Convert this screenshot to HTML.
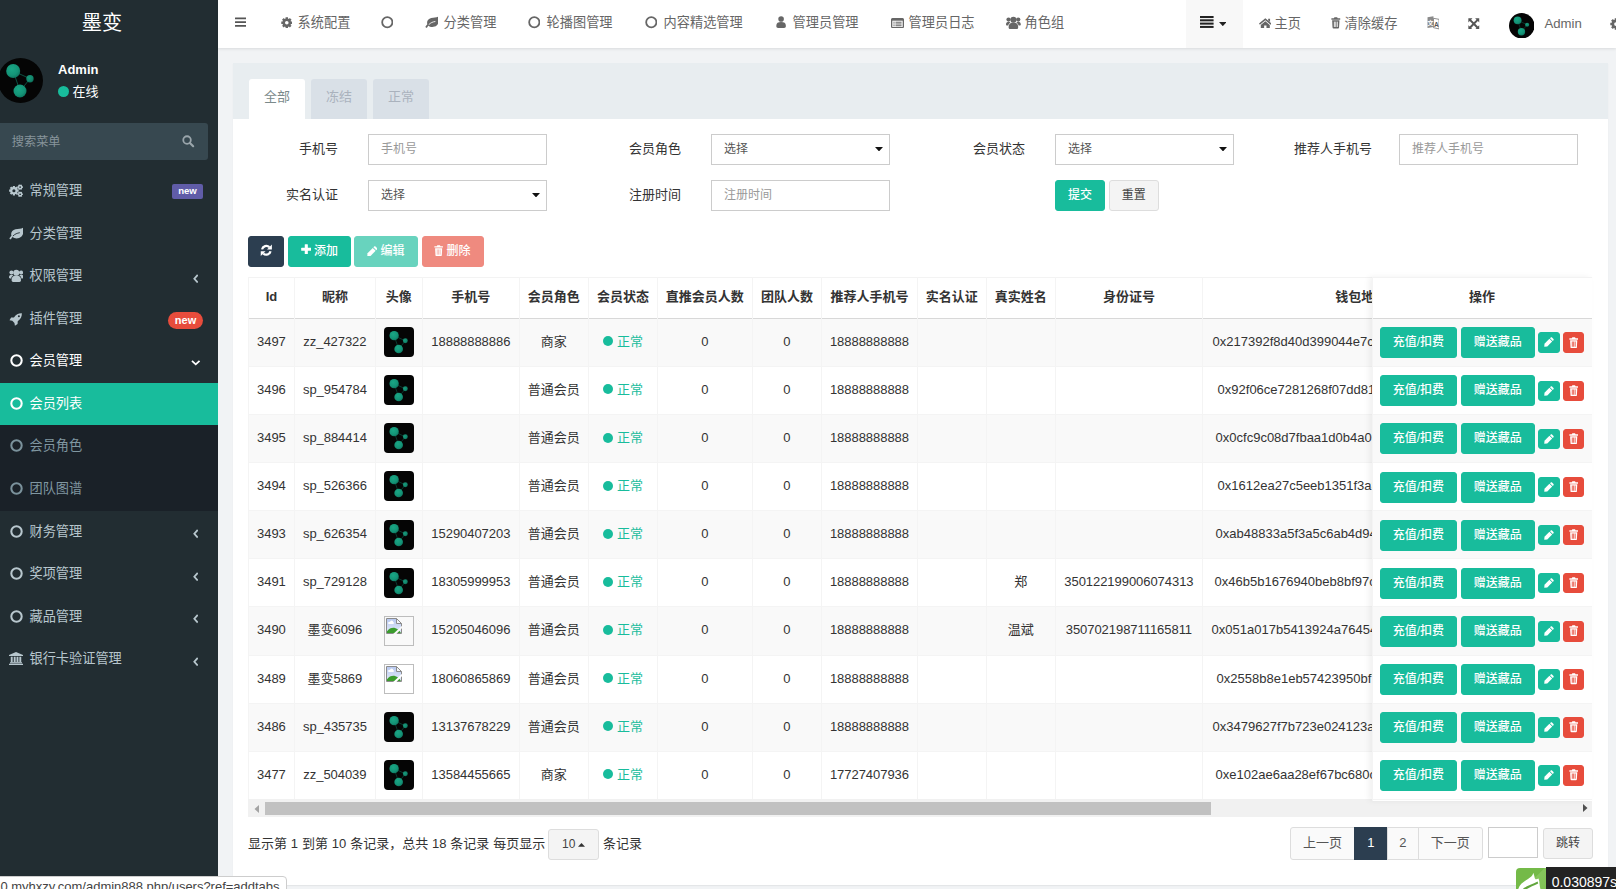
<!DOCTYPE html>
<html lang="zh-CN">
<head>
<meta charset="utf-8">
<title>墨变</title>
<style>

*{box-sizing:border-box;margin:0;padding:0}
html,body{width:1616px;height:889px;overflow:hidden}
body{position:relative;background:#f1f3f5;font-family:"Liberation Sans","Noto Sans CJK SC",sans-serif;font-size:13px;color:#333;line-height:1}
.ic{display:block;position:absolute}
.abs{position:absolute;white-space:nowrap}
/* ---------- sidebar ---------- */
#side{position:absolute;left:0;top:0;width:218px;height:889px;background:#222d32;overflow:hidden}
#side .logo{position:absolute;left:0;top:0;width:204px;height:47px;text-align:center;color:#fff;font-size:20.2px;line-height:47.6px;font-weight:400}
#side .uname{left:58px;top:62px;color:#fff;font-weight:bold;font-size:13px;line-height:15px}
#side .ustat{left:72.6px;top:84px;color:#fff;font-size:13px;line-height:15px}
#side .udot{position:absolute;left:58px;top:86px;width:11px;height:11px;border-radius:50%;background:#18bc9c}
#side .search{position:absolute;left:0;top:123px;width:208px;height:37px;background:#374850;border-radius:0 3px 3px 0}
#side .search span{left:11.8px;top:11px;color:#87949b;font-size:12.2px;line-height:16px}
.mi{position:absolute;left:0;width:218px;height:42.6px;color:#b8c7ce}
.mi .t{left:29.5px;top:13.5px;font-size:13.2px;line-height:16px}
.mi.sub{color:#8097a1}
.subbg{position:absolute;left:0;top:383.2px;width:218px;height:127.8px;background:#1a2128}
.mi.act{color:#fff}
.actbg{position:absolute;left:0;top:383.2px;width:218px;height:42px;background:#18bc9c}
.mi.open{color:#fff}
.badge1{position:absolute;left:172px;top:15px;width:31px;height:15px;background:#605ca8;border-radius:2px;color:#fff;font-size:9.6px;font-weight:bold;line-height:14px;text-align:center}
.badge2{position:absolute;left:168px;top:15px;width:35px;height:17px;background:#e74c3c;border-radius:9px;color:#fff;font-size:11px;font-weight:bold;line-height:16px;text-align:center}
/* ---------- header ---------- */
#head{position:absolute;left:218px;top:0;width:1398px;height:47.5px;background:#fff;box-shadow:0 1px 3px rgba(0,0,0,.10)}
#head .nt{top:15px;font-size:13.2px;line-height:16px;color:#666}
#head .dd{position:absolute;left:967.5px;top:0;width:57.5px;height:47.5px;background:#f8f8f8}
/* ---------- main panel ---------- */
#panel{position:absolute;left:233px;top:63px;width:1375px;height:822px;background:#fff;border-radius:0;box-shadow:0 1px 1px rgba(0,0,0,.05)}
#phead{position:absolute;left:0;top:0;width:1375px;height:56px;background:#e8edf0;border-radius:0}
.tab{position:absolute;top:16px;width:56px;height:40px;border-radius:3px 3px 0 0;background:#d9e0e7;color:#aab2bd;font-size:13px;line-height:35.4px;text-align:center}
.tab.on{background:#fff;color:#7b8a8b}
.lbl{position:absolute;text-align:right;width:120px;font-size:13px;line-height:16px;color:#333}
.inp{position:absolute;width:179px;height:31px;border:1px solid #ccc;background:#fff;border-radius:0;font-size:12px;line-height:16px;color:#999;padding:6.2px 12px}
.inp.sel{color:#555}
.btn{position:absolute;border-radius:3px;color:#fff;font-size:12px;text-align:center;white-space:nowrap}
.b-green{background:#18bc9c;border:1px solid #18bc9c}
.b-dark{background:#2c3e50;border:1px solid #2c3e50}
.b-red{background:#e74c3c;border:1px solid #e74c3c}
.b-def{background:#f4f4f4;border:1px solid #ddd;color:#444}
.dis{opacity:.65}
/* ---------- table ---------- */
#tw{position:absolute;left:15px;top:214.5px;width:1344px;height:523px;overflow:hidden}
table{border-collapse:collapse;table-layout:fixed;width:1560px;font-size:13px}
th,td{border:1px solid #f0f0f0;text-align:center;vertical-align:middle;white-space:nowrap;overflow:hidden;padding:0}
th{height:40.5px;font-weight:bold;color:#333;border-bottom:2px solid #ddd;border-top:1px solid #f0f0f0;background:#fff}
td{height:48.1px;color:#333}
tr.o td{background:#f9f9f9}
.st{color:#18bc9c}
.st i{display:inline-block;width:10px;height:10px;border-radius:50%;background:#18bc9c;margin-right:4px;vertical-align:-0.5px}
.av{position:relative;display:block;width:30px;height:30px;margin:0 auto}
.brk{position:relative;display:block;width:30px;height:30px;margin:0 auto;border:1px solid #bdbdbd;background:transparent;overflow:hidden}
.num{letter-spacing:-0.05px}
#fix{position:absolute;left:1139px;top:214.5px;width:220px;height:523px;background:#fff;box-shadow:-3px 0 6px rgba(0,0,0,.06)}
#fix table{width:220px}
#fix td{position:relative}
.ob{position:absolute;top:8.4px;height:31px;line-height:29px;font-size:12px;font-weight:500}
.ob.s{top:13.6px;height:20.5px;width:22px}
/* scrollbar */
#sb{position:absolute;height:18px;background:#f1f1f1}
#sb .th{position:absolute;left:16.8px;top:3px;width:946px;height:13px;background:#c1c1c1}
/* pagination */
.pinfo{left:15px;top:772px;font-size:13px;line-height:16px;color:#333;word-spacing:0.25px}
.pg{position:absolute;top:764.5px;height:32px;border:1px solid #ddd;background:#fafafa;color:#555;font-size:13px;line-height:30px;text-align:center}
.pg.on{background:#2c3e50;border-color:#2c3e50;color:#fff}
/* overlays */
#status{position:absolute;left:-1px;top:875.7px;width:288.3px;height:20px;background:#fff;border:1px solid #cdcdcd;border-radius:0 4px 0 0;font-size:13px;line-height:16px;color:#444;padding-left:0.5px;padding-top:2.5px;letter-spacing:-0.02px;white-space:nowrap;overflow:hidden}
#trace1{position:absolute;left:1516.2px;top:867.9px;width:30px;height:22px;background:linear-gradient(135deg,#74ba48 0%,#74ba48 55%,#86c65c 56%,#7fc254 100%);border-radius:4px 0 0 0;overflow:hidden}
#trace2{position:absolute;left:1545.9px;top:867.2px;width:71px;height:22px;background:#232323;color:#fff;font-size:14px;line-height:30.6px;padding-left:5.8px;white-space:nowrap;overflow:hidden}

#tw,#fix{overflow:hidden}
.r{position:absolute;left:0;width:1400px;background:#fff;border-bottom:1px solid #f4f4f4}
#fix .r{width:220.4px}
.r.o{background:#f9f9f9}
.r.h{border-top:1px solid #f3f3f3;border-bottom:1.4px solid #d8d8d8;font-weight:bold;background:#fff}
.c{position:absolute;top:0;height:100%;text-align:center;white-space:nowrap;overflow:hidden;font-size:13px;line-height:45px;color:#333}
.r.h .c{line-height:38.4px}
.c .ic{position:absolute}
.c .brk{position:absolute;margin:0}
.vb{position:absolute;top:0;width:1px;height:100%;background:#f4f4f4}
#fix{overflow:visible;z-index:2}
.tb{font-weight:500}

</style>
</head>
<body>
<svg width="0" height="0" style="position:absolute">
<defs>
<radialGradient id="lg" cx="40%" cy="35%" r="75%">
<stop offset="0" stop-color="#1aa685"/><stop offset="0.6" stop-color="#149477"/><stop offset="1" stop-color="#0c6d58"/>
</radialGradient>
<linearGradient id="sky" x1="0" y1="0" x2="0" y2="1"><stop offset="0" stop-color="#b7c8f0"/><stop offset="1" stop-color="#e6edfa"/></linearGradient>
</defs>
</svg>
<div id="side">
<div class="logo">墨变</div>
<div class="subbg"></div><div class="actbg"></div>
<svg class="ic" width="45" height="45" viewBox="0 0 45 45" style="left:-2.4px;top:57.8px"><circle cx="22.5" cy="22.5" r="22.5" fill="#050505"/><g stroke="#0f705b" stroke-width="0.7" fill="none"><path d="M15.2 13 L32 20.7 L22 33 Z"/></g><circle cx="15.2" cy="13" r="7.0" fill="url(#lg)"/><circle cx="32" cy="20.7" r="3.7" fill="url(#lg)" opacity="0.9"/><circle cx="22" cy="33" r="6.5" fill="url(#lg)"/></svg>
<span class="abs uname">Admin</span>
<i class="udot"></i><span class="abs ustat">在线</span>
<div class="search"><span class="abs">搜索菜单</span><svg class="ic" width="12.6" height="12.6" viewBox="0 0 14 14" style="left:182.4px;top:12.4px"><circle cx="5.6" cy="5.6" r="4.2" fill="none" stroke="#9aa5ab" stroke-width="2"/><path d="M8.8 8.8 L12.4 12.4" stroke="#9aa5ab" stroke-width="2.4" stroke-linecap="round"/></svg></div>
<div class="mi " style="top:169.45px"><svg class="ic" width="14" height="13.222222222222221" viewBox="0 0 18 17" style="left:9px;top:15px"><path d="M11.01 7.23 L12.45 7.23 L12.45 9.97 L11.01 9.97 L10.59 10.96 L11.62 11.98 L9.68 13.92 L8.66 12.89 L7.67 13.31 L7.67 14.75 L4.93 14.75 L4.93 13.31 L3.94 12.89 L2.92 13.92 L0.98 11.98 L2.01 10.96 L1.59 9.97 L0.15 9.97 L0.15 7.23 L1.59 7.23 L2.01 6.24 L0.98 5.22 L2.92 3.28 L3.94 4.31 L4.93 3.89 L4.93 2.45 L7.67 2.45 L7.67 3.89 L8.66 4.31 L9.68 3.28 L11.62 5.22 L10.59 6.24 Z M4.30 8.60 a2.0 2.0 0 1 0 4.0 0 a2.0 2.0 0 1 0 -4.0 0 Z" fill="#b8c7ce" fill-rule="evenodd"/><path d="M16.90 2.97 L17.84 2.93 L17.84 5.07 L16.90 5.03 L16.49 5.74 L17.00 6.53 L15.14 7.60 L14.71 6.77 L13.89 6.77 L13.46 7.60 L11.60 6.53 L12.11 5.74 L11.70 5.03 L10.76 5.07 L10.76 2.93 L11.70 2.97 L12.11 2.26 L11.60 1.47 L13.46 0.40 L13.89 1.23 L14.71 1.23 L15.14 0.40 L17.00 1.47 L16.49 2.26 Z M13.20 4.00 a1.1 1.1 0 1 0 2.2 0 a1.1 1.1 0 1 0 -2.2 0 Z" fill="#b8c7ce" fill-rule="evenodd"/><path d="M16.90 12.17 L17.84 12.13 L17.84 14.27 L16.90 14.23 L16.49 14.94 L17.00 15.73 L15.14 16.80 L14.71 15.97 L13.89 15.97 L13.46 16.80 L11.60 15.73 L12.11 14.94 L11.70 14.23 L10.76 14.27 L10.76 12.13 L11.70 12.17 L12.11 11.46 L11.60 10.67 L13.46 9.60 L13.89 10.43 L14.71 10.43 L15.14 9.60 L17.00 10.67 L16.49 11.46 Z M13.20 13.20 a1.1 1.1 0 1 0 2.2 0 a1.1 1.1 0 1 0 -2.2 0 Z" fill="#b8c7ce" fill-rule="evenodd"/></svg><span class="abs t">常规管理</span><span class="badge1">new</span></div>
<div class="mi " style="top:212.03px"><svg class="ic" width="14.4" height="12.6" viewBox="0 0 16 14" style="left:9px;top:15px"><path d="M15.7 0.6 C17 5.2 15.8 10.6 11.2 12.2 C8.4 13.2 5.6 12.6 3.9 11.2 C3.2 11.9 2.7 12.7 2.1 13.8 L0.3 12.9 C1.1 11.5 1.9 10.5 2.7 9.7 C1.6 6.4 3.6 3.2 7.2 2.4 C10.4 1.7 13.7 2.2 15.7 0.6 Z" fill="#b8c7ce"/><path d="M4.6 9.8 C6.6 7.8 9 6.8 11.6 6.4" stroke="#222d32" stroke-width="1.0" stroke-linecap="round" fill="none"/></svg><span class="abs t">分类管理</span></div>
<div class="mi " style="top:254.61px"><svg class="ic" width="14.6" height="12.977777777777778" viewBox="0 0 18 16" style="left:8.9px;top:14.2px"><g fill="#b8c7ce"><circle cx="9" cy="4.6" r="3.7"/><path d="M3.2 14.2 C2.9 10.2 5 8.0 9 8.0 C13 8.0 15.1 10.2 14.8 14.2 C14.7 15.3 14 16 12.9 16 L5.1 16 C4 16 3.3 15.3 3.2 14.2 Z"/><circle cx="3.1" cy="4.3" r="2.6"/><circle cx="14.9" cy="4.3" r="2.6"/><path d="M0 10.2 C0 8.0 1.1 7.0 3 7.0 C4 7.0 4.8 7.3 5.4 7.8 C3.8 8.8 2.9 10 2.7 11.6 L1.4 11.6 C0.5 11.6 0 11.1 0 10.2 Z"/><path d="M18 10.2 C18 8.0 16.9 7.0 15 7.0 C14 7.0 13.2 7.3 12.6 7.8 C14.2 8.8 15.1 10 15.3 11.6 L16.6 11.6 C17.5 11.6 18 11.1 18 10.2 Z"/></g></svg><span class="abs t">权限管理</span><svg class="ic" width="5.7" height="9.5" viewBox="0 0 6 10" style="left:192.8px;top:19px"><path d="M5 1 L1.4 5 L5 9" fill="none" stroke="#b8c7ce" stroke-width="1.9"/></svg></div>
<div class="mi " style="top:297.19px"><svg class="ic" width="13.2" height="13.2" viewBox="0 0 16 16" style="left:9.4px;top:15.6px"><g fill="#b8c7ce"><path d="M15.6 0.4 C15.8 4.4 14.2 7.4 10.6 10 L10.4 13.4 L7.2 15.4 L6.6 12 L4 9.4 L0.6 8.8 L2.6 5.6 L6 5.4 C8.6 1.8 11.6 0.2 15.6 0.4 Z"/></g><circle cx="12" cy="4" r="1.2" fill="#222d32"/></svg><span class="abs t">插件管理</span><span class="badge2">new</span></div>
<div class="mi open" style="top:339.77px"><svg class="ic" width="13" height="13" viewBox="0 0 14 14" style="left:9.5px;top:14.5px"><circle cx="7" cy="7" r="5.6000000000000005" fill="none" stroke="#fff" stroke-width="2.2"/></svg><span class="abs t">会员管理</span><svg class="ic" width="9.5" height="5.7" viewBox="0 0 10 6" style="left:191.3px;top:20.5px"><path d="M1 1 L5 4.6 L9 1" fill="none" stroke="#fff" stroke-width="1.9"/></svg></div>
<div class="mi sub act" style="top:382.35px"><svg class="ic" width="13" height="13" viewBox="0 0 14 14" style="left:9.5px;top:14.5px"><circle cx="7" cy="7" r="5.6000000000000005" fill="none" stroke="#fff" stroke-width="2.2"/></svg><span class="abs t">会员列表</span></div>
<div class="mi sub" style="top:424.93px"><svg class="ic" width="13" height="13" viewBox="0 0 14 14" style="left:9.5px;top:14.5px"><circle cx="7" cy="7" r="5.6000000000000005" fill="none" stroke="#7b929c" stroke-width="2.2"/></svg><span class="abs t">会员角色</span></div>
<div class="mi sub" style="top:467.51px"><svg class="ic" width="13" height="13" viewBox="0 0 14 14" style="left:9.5px;top:14.5px"><circle cx="7" cy="7" r="5.6000000000000005" fill="none" stroke="#7b929c" stroke-width="2.2"/></svg><span class="abs t">团队图谱</span></div>
<div class="mi " style="top:510.09px"><svg class="ic" width="13" height="13" viewBox="0 0 14 14" style="left:9.5px;top:14.5px"><circle cx="7" cy="7" r="5.6000000000000005" fill="none" stroke="#b8c7ce" stroke-width="2.2"/></svg><span class="abs t">财务管理</span><svg class="ic" width="5.7" height="9.5" viewBox="0 0 6 10" style="left:192.8px;top:19px"><path d="M5 1 L1.4 5 L5 9" fill="none" stroke="#b8c7ce" stroke-width="1.9"/></svg></div>
<div class="mi " style="top:552.67px"><svg class="ic" width="13" height="13" viewBox="0 0 14 14" style="left:9.5px;top:14.5px"><circle cx="7" cy="7" r="5.6000000000000005" fill="none" stroke="#b8c7ce" stroke-width="2.2"/></svg><span class="abs t">奖项管理</span><svg class="ic" width="5.7" height="9.5" viewBox="0 0 6 10" style="left:192.8px;top:19px"><path d="M5 1 L1.4 5 L5 9" fill="none" stroke="#b8c7ce" stroke-width="1.9"/></svg></div>
<div class="mi " style="top:595.25px"><svg class="ic" width="13" height="13" viewBox="0 0 14 14" style="left:9.5px;top:14.5px"><circle cx="7" cy="7" r="5.6000000000000005" fill="none" stroke="#b8c7ce" stroke-width="2.2"/></svg><span class="abs t">藏品管理</span><svg class="ic" width="5.7" height="9.5" viewBox="0 0 6 10" style="left:192.8px;top:19px"><path d="M5 1 L1.4 5 L5 9" fill="none" stroke="#b8c7ce" stroke-width="1.9"/></svg></div>
<div class="mi " style="top:637.83px"><svg class="ic" width="14" height="13.125" viewBox="0 0 16 15" style="left:8.5px;top:14px"><g fill="#b8c7ce"><path d="M8 0 L16 3.4 L16 4.6 L0 4.6 L0 3.4 Z"/><rect x="2" y="5.4" width="2.2" height="6"/><rect x="5.4" y="5.4" width="2.2" height="6"/><rect x="8.6" y="5.4" width="2.2" height="6"/><rect x="11.8" y="5.4" width="2.2" height="6"/><rect x="1.2" y="11.6" width="13.6" height="1.4"/><rect x="0" y="13.4" width="16" height="1.6"/></g></svg><span class="abs t">银行卡验证管理</span><svg class="ic" width="5.7" height="9.5" viewBox="0 0 6 10" style="left:192.8px;top:19px"><path d="M5 1 L1.4 5 L5 9" fill="none" stroke="#b8c7ce" stroke-width="1.9"/></svg></div>
</div>
<div id="head">
<svg class="ic" width="11.2" height="10.266666666666666" viewBox="0 0 12 11" style="left:17px;top:17px"><g fill="#555"><rect x="0" y="0.5" width="12" height="2" rx="0.4"/><rect x="0" y="4.5" width="12" height="2" rx="0.4"/><rect x="0" y="8.5" width="12" height="2" rx="0.4"/></g></svg>
<svg class="ic" width="11.6" height="11.6" viewBox="0 0 16 16" style="left:62.69999999999999px;top:16.6px"><path d="M13.76 6.33 L15.61 6.30 L15.61 9.70 L13.76 9.67 L13.26 10.89 L14.59 12.18 L12.18 14.59 L10.89 13.26 L9.67 13.76 L9.70 15.61 L6.30 15.61 L6.33 13.76 L5.11 13.26 L3.82 14.59 L1.41 12.18 L2.74 10.89 L2.24 9.67 L0.39 9.70 L0.39 6.30 L2.24 6.33 L2.74 5.11 L1.41 3.82 L3.82 1.41 L5.11 2.74 L6.33 2.24 L6.30 0.39 L9.70 0.39 L9.67 2.24 L10.89 2.74 L12.18 1.41 L14.59 3.82 L13.26 5.11 Z M5.50 8.00 a2.5 2.5 0 1 0 5.0 0 a2.5 2.5 0 1 0 -5.0 0 Z" fill="#666" fill-rule="evenodd"/></svg>
<span class="abs nt" style="left:79.6px;top:14.6px">系统配置</span>
<svg class="ic" width="12.6" height="12.6" viewBox="0 0 14 14" style="left:162.60000000000002px;top:16px"><circle cx="7" cy="7" r="5.7" fill="none" stroke="#666" stroke-width="2.0"/></svg>
<svg class="ic" width="13.8" height="12.075000000000001" viewBox="0 0 16 14" style="left:206.60000000000002px;top:16.4px"><path d="M15.7 0.6 C17 5.2 15.8 10.6 11.2 12.2 C8.4 13.2 5.6 12.6 3.9 11.2 C3.2 11.9 2.7 12.7 2.1 13.8 L0.3 12.9 C1.1 11.5 1.9 10.5 2.7 9.7 C1.6 6.4 3.6 3.2 7.2 2.4 C10.4 1.7 13.7 2.2 15.7 0.6 Z" fill="#666"/><path d="M4.6 9.8 C6.6 7.8 9 6.8 11.6 6.4" stroke="#fff" stroke-width="1.0" stroke-linecap="round" fill="none"/></svg>
<span class="abs nt" style="left:225.6px;top:14.6px">分类管理</span>
<svg class="ic" width="12.6" height="12.6" viewBox="0 0 14 14" style="left:309.79999999999995px;top:16px"><circle cx="7" cy="7" r="5.7" fill="none" stroke="#666" stroke-width="2.0"/></svg>
<span class="abs nt" style="left:328.6px;top:14.6px">轮播图管理</span>
<svg class="ic" width="12.6" height="12.6" viewBox="0 0 14 14" style="left:426.79999999999995px;top:16px"><circle cx="7" cy="7" r="5.7" fill="none" stroke="#666" stroke-width="2.0"/></svg>
<span class="abs nt" style="left:445.6px;top:14.6px">内容精选管理</span>
<svg class="ic" width="10.2" height="11.899999999999999" viewBox="0 0 12 14" style="left:557.8px;top:16.2px"><g fill="#666"><circle cx="6" cy="3.6" r="3.3"/><path d="M0.4 12 C0.2 8.6 2.2 7.2 6 7.2 C9.8 7.2 11.8 8.6 11.6 12 C11.5 13.3 10.8 14 9.6 14 L2.4 14 C1.2 14 0.5 13.3 0.4 12 Z"/></g></svg>
<span class="abs nt" style="left:574.6px;top:14.6px">管理员管理</span>
<svg class="ic" width="13" height="10.214285714285714" viewBox="0 0 14 11" style="left:672.5px;top:17.5px"><rect x="0.7" y="0.7" width="12.6" height="9.6" rx="1" fill="none" stroke="#666" stroke-width="1.4"/><g fill="#666"><rect x="0.7" y="0.7" width="12.6" height="2.2"/><rect x="2.6" y="4" width="1.3" height="1.1"/><rect x="4.8" y="4" width="6.6" height="1.1"/><rect x="2.6" y="5.9" width="1.3" height="1.1"/><rect x="4.8" y="5.9" width="6.6" height="1.1"/><rect x="2.6" y="7.8" width="1.3" height="1.1"/><rect x="4.8" y="7.8" width="6.6" height="1.1"/></g></svg>
<span class="abs nt" style="left:690.6px;top:14.6px">管理员日志</span>
<svg class="ic" width="14.8" height="13.155555555555557" viewBox="0 0 18 16" style="left:788px;top:16px"><g fill="#666"><circle cx="9" cy="4.6" r="3.7"/><path d="M3.2 14.2 C2.9 10.2 5 8.0 9 8.0 C13 8.0 15.1 10.2 14.8 14.2 C14.7 15.3 14 16 12.9 16 L5.1 16 C4 16 3.3 15.3 3.2 14.2 Z"/><circle cx="3.1" cy="4.3" r="2.6"/><circle cx="14.9" cy="4.3" r="2.6"/><path d="M0 10.2 C0 8.0 1.1 7.0 3 7.0 C4 7.0 4.8 7.3 5.4 7.8 C3.8 8.8 2.9 10 2.7 11.6 L1.4 11.6 C0.5 11.6 0 11.1 0 10.2 Z"/><path d="M18 10.2 C18 8.0 16.9 7.0 15 7.0 C14 7.0 13.2 7.3 12.6 7.8 C14.2 8.8 15.1 10 15.3 11.6 L16.6 11.6 C17.5 11.6 18 11.1 18 10.2 Z"/></g></svg>
<span class="abs nt" style="left:806.6px;top:14.6px">角色组</span>
<div class="dd"><svg class="ic" width="13.6" height="11.948571428571428" viewBox="0 0 14 12.3" style="left:14.8px;top:16.2px"><g fill="#222"><rect x="0" y="0" width="14" height="2.1"/><rect x="0" y="3.4" width="14" height="2.1"/><rect x="0" y="6.8" width="14" height="2.1"/><rect x="0" y="10.2" width="14" height="2.1"/></g></svg><svg class="ic" width="7.6" height="4.18" viewBox="0 0 10 5.5" style="left:33.2px;top:21.8px"><path d="M0 0 L10 0 L5 5.5 Z" fill="#222"/></svg></div>
<svg class="ic" width="12.6" height="10.799999999999999" viewBox="0 0 14 12" style="left:1040.6px;top:17.6px"><g fill="#666"><path d="M7 0.2 L14 6.2 L13 7.5 L7 2.5 L1 7.5 L0 6.2 Z"/><path d="M10.2 0.8 L12.3 0.8 L12.3 4.4 L10.2 2.7 Z"/><path d="M7 3.5 L12 7.7 L12 12 L8.3 12 L8.3 8.4 L5.7 8.4 L5.7 12 L2 12 L2 7.7 Z"/></g></svg>
<span class="abs nt" style="left:1056.6px;top:15.6px">主页</span>
<svg class="ic" width="9.6" height="11.52" viewBox="0 0 10 12" style="left:1113px;top:17.4px"><g fill="#666"><path d="M3.6 0.2 L6.4 0.2 L7 1.4 L9.6 1.4 L9.6 2.8 L0.4 2.8 L0.4 1.4 L3 1.4 Z"/><path d="M1.2 3.4 L8.8 3.4 L8.4 11 C8.35 11.6 8 12 7.4 12 L2.6 12 C2 12 1.65 11.6 1.6 11 Z"/></g><g fill="#fff"><rect x="3" y="4.8" width="0.9" height="5.6"/><rect x="4.55" y="4.8" width="0.9" height="5.6"/><rect x="6.1" y="4.8" width="0.9" height="5.6"/></g></svg>
<span class="abs nt" style="left:1126.6px;top:15.6px">清除缓存</span>
<svg class="ic" width="12.5" height="13.541666666666666" viewBox="0 0 12 13" style="left:1208.5px;top:16px"><path d="M0.5 1.2 L6.2 0.3 L6.2 10.6 L0.5 11.6 Z" fill="#8a8a8a"/><path d="M6.2 2.2 L11.6 3.2 L11.6 12.4 L6.2 11.2 Z" fill="#fff" stroke="#777" stroke-width="0.8"/><text x="3.3" y="8.2" font-size="6" font-family="Liberation Sans, Noto Sans CJK SC, sans-serif" font-weight="bold" fill="#fff" text-anchor="middle">文</text><text x="9" y="10.2" font-size="6.4" font-family="Liberation Sans, Noto Sans CJK SC, sans-serif" font-weight="bold" fill="#555" text-anchor="middle">A</text></svg>
<svg class="ic" width="11.6" height="11.6" viewBox="0 0 13 13" style="left:1250px;top:17.8px"><g fill="#555"><path d="M0.4 0.4 L5 0.4 L3.5 1.9 L6.5 4.9 L9.5 1.9 L8 0.4 L12.6 0.4 L12.6 5 L11.1 3.5 L8.1 6.5 L11.1 9.5 L12.6 8 L12.6 12.6 L8 12.6 L9.5 11.1 L6.5 8.1 L3.5 11.1 L5 12.6 L0.4 12.6 L0.4 8 L1.9 9.5 L4.9 6.5 L1.9 3.5 L0.4 5 Z"/></g></svg>
<svg class="ic" width="25.5" height="25.5" viewBox="0 0 45 45" style="left:1290.6px;top:12.6px"><circle cx="22.5" cy="22.5" r="22.5" fill="#050505"/><g stroke="#0f705b" stroke-width="0.7" fill="none"><path d="M15.2 13 L32 20.7 L22 33 Z"/></g><circle cx="15.2" cy="13" r="7.0" fill="url(#lg)"/><circle cx="32" cy="20.7" r="3.7" fill="url(#lg)" opacity="0.9"/><circle cx="22" cy="33" r="6.5" fill="url(#lg)"/></svg>
<span class="abs nt" style="left:1326.3999999999999px;top:15.6px">Admin</span>
<svg class="ic" width="12" height="12" viewBox="0 0 16 16" style="left:1392.2px;top:17.6px"><path d="M13.76 6.33 L15.61 6.30 L15.61 9.70 L13.76 9.67 L13.26 10.89 L14.59 12.18 L12.18 14.59 L10.89 13.26 L9.67 13.76 L9.70 15.61 L6.30 15.61 L6.33 13.76 L5.11 13.26 L3.82 14.59 L1.41 12.18 L2.74 10.89 L2.24 9.67 L0.39 9.70 L0.39 6.30 L2.24 6.33 L2.74 5.11 L1.41 3.82 L3.82 1.41 L5.11 2.74 L6.33 2.24 L6.30 0.39 L9.70 0.39 L9.67 2.24 L10.89 2.74 L12.18 1.41 L14.59 3.82 L13.26 5.11 Z M5.50 8.00 a2.5 2.5 0 1 0 5.0 0 a2.5 2.5 0 1 0 -5.0 0 Z" fill="#666" fill-rule="evenodd"/></svg>
</div>
<div id="panel">
<div id="phead"><div class="tab on" style="left:16px">全部</div><div class="tab" style="left:78px">冻结</div><div class="tab" style="left:140px">正常</div></div>
<div class="lbl" style="left:-15px;top:77.5px">手机号</div><div class="inp" style="left:135px;top:71px">手机号</div>
<div class="lbl" style="left:328px;top:77.5px">会员角色</div><div class="inp sel" style="left:478px;top:71px">选择<svg class="ic" width="8" height="4.4" viewBox="0 0 10 5.5" style="left:163px;top:12px"><path d="M0 0 L10 0 L5 5.5 Z" fill="#111"/></svg></div>
<div class="lbl" style="left:672px;top:77.5px">会员状态</div><div class="inp sel" style="left:822px;top:71px">选择<svg class="ic" width="8" height="4.4" viewBox="0 0 10 5.5" style="left:163px;top:12px"><path d="M0 0 L10 0 L5 5.5 Z" fill="#111"/></svg></div>
<div class="lbl" style="left:1019px;top:77.5px">推荐人手机号</div><div class="inp" style="left:1166px;top:71px">推荐人手机号</div>
<div class="lbl" style="left:-15px;top:123.5px">实名认证</div><div class="inp sel" style="left:135px;top:117px">选择<svg class="ic" width="8" height="4.4" viewBox="0 0 10 5.5" style="left:163px;top:12px"><path d="M0 0 L10 0 L5 5.5 Z" fill="#111"/></svg></div>
<div class="lbl" style="left:328px;top:123.5px">注册时间</div><div class="inp" style="left:478px;top:117px">注册时间</div>
<div class="btn b-green tb" style="left:822px;top:117px;width:50px;height:31px;line-height:29px">提交</div>
<div class="btn b-def" style="left:876px;top:117px;width:49.5px;height:31px;line-height:29px">重置</div>
<div class="btn b-dark" style="left:15px;top:173px;width:36px;height:31px"><svg class="ic" width="12.6" height="12.6" viewBox="0 0 14 14" style="left:11.100000000000023px;top:7.300000000000011px"><g fill="none" stroke="#fff" stroke-width="2.5"><path d="M2.3 6.0 A4.8 4.8 0 0 1 10.4 3.5"/><path d="M11.7 8.0 A4.8 4.8 0 0 1 3.6 10.5"/></g><g fill="#fff"><path d="M13.2 0.6 L13.2 6 L7.8 6 Z"/><path d="M0.8 13.4 L0.8 8 L6.2 8 Z"/></g></svg></div>
<div class="btn b-green tb" style="left:55.30000000000001px;top:173px;width:62.4px;height:31px;line-height:29px;text-align:left;padding-left:24.6px"><svg class="ic" width="10.6" height="10.6" viewBox="0 0 11 11" style="left:11.3px;top:6.9px"><g fill="#fff"><rect x="3.9" y="0.2" width="3.2" height="10.6" rx="0.6"/><rect x="0.2" y="3.9" width="10.6" height="3.2" rx="0.6"/></g></svg>添加</div>
<div class="btn b-green dis tb" style="left:121px;top:173px;width:63.8px;height:31px;line-height:29px;text-align:left;padding-left:25.6px"><svg class="ic" width="10.6" height="10.6" viewBox="0 0 12 12" style="left:11.9px;top:8.6px"><g fill="#fff"><path d="M8.1 0.6 C8.5 0.2 9.2 0.2 9.6 0.6 L11.4 2.4 C11.8 2.8 11.8 3.5 11.4 3.9 L10.5 4.8 L7.2 1.5 Z"/><path d="M6.5 2.2 L9.8 5.5 L3.9 11.4 L0.3 11.7 L0.6 8.1 Z"/></g></svg>编辑</div>
<div class="btn b-red dis tb" style="left:189px;top:173px;width:61.6px;height:31px;line-height:29px;text-align:left;padding-left:23.4px"><svg class="ic" width="9.3" height="11.16" viewBox="0 0 10 12" style="left:11.3px;top:8.2px"><g fill="#fff"><path d="M3.6 0.2 L6.4 0.2 L7 1.4 L9.6 1.4 L9.6 2.8 L0.4 2.8 L0.4 1.4 L3 1.4 Z"/><path d="M1.2 3.4 L8.8 3.4 L8.4 11 C8.35 11.6 8 12 7.4 12 L2.6 12 C2 12 1.65 11.6 1.6 11 Z"/></g><g fill="#ee8d84"><rect x="3" y="4.8" width="0.9" height="5.6"/><rect x="4.55" y="4.8" width="0.9" height="5.6"/><rect x="6.1" y="4.8" width="0.9" height="5.6"/></g></svg>删除</div>
<div id="tw" style="left:15.4px;top:214.4px;width:1343.9px;height:522.5px">
<div class="r h" style="top:0;height:41.5px">
<div class="c " style="left:0.0px;width:46.1px">Id</div>
<div class="c " style="left:46.1px;width:80.8px">昵称</div>
<div class="c " style="left:126.9px;width:47.1px">头像</div>
<div class="c " style="left:174.0px;width:96.9px">手机号</div>
<div class="c " style="left:270.9px;width:69.2px">会员角色</div>
<div class="c " style="left:340.1px;width:68.8px">会员状态</div>
<div class="c " style="left:408.9px;width:95.1px">直推会员人数</div>
<div class="c " style="left:504.0px;width:69.1px">团队人数</div>
<div class="c " style="left:573.1px;width:95.9px">推荐人手机号</div>
<div class="c " style="left:669.0px;width:68.8px">实名认证</div>
<div class="c " style="left:737.8px;width:69.2px">真实姓名</div>
<div class="c " style="left:807.0px;width:147.0px">身份证号</div>
<div class="c " style="left:954.0px;width:317.6px">钱包地址</div>
</div>
<div class="r o" style="top:41.5px;height:48.1px">
<div class="c num" style="left:0.0px;width:46.1px">3497</div>
<div class="c num" style="left:46.1px;width:80.8px">zz_427322</div>
<div class="c " style="left:126.9px;width:47.1px"><svg class="ic" width="30" height="30" viewBox="0 0 45 45" style="left:8.6px;top:8.3px"><rect x="0" y="0" width="45" height="45" rx="6" ry="6" fill="#050505"/><g stroke="#0f705b" stroke-width="0.7" fill="none"><path d="M15.2 13 L32 20.7 L22 33 Z"/></g><circle cx="15.2" cy="13" r="7.0" fill="url(#lg)"/><circle cx="32" cy="20.7" r="3.7" fill="url(#lg)" opacity="0.9"/><circle cx="22" cy="33" r="6.5" fill="url(#lg)"/></svg></div>
<div class="c num" style="left:174.0px;width:96.9px">18888888886</div>
<div class="c " style="left:270.9px;width:69.2px">商家</div>
<div class="c " style="left:340.1px;width:68.8px"><span class="st"><i></i>正常</span></div>
<div class="c " style="left:408.9px;width:95.1px">0</div>
<div class="c " style="left:504.0px;width:69.1px">0</div>
<div class="c num" style="left:573.1px;width:95.9px">18888888888</div>
<div class="c " style="left:669.0px;width:68.8px"></div>
<div class="c " style="left:737.8px;width:69.2px"></div>
<div class="c num" style="left:807.0px;width:147.0px"></div>
<div class="c" style="left:954.0px;width:330px;text-align:left;padding-left:10.2px">0x217392f8d40d399044e7c5a1b03e9f27d6c84a10b5</div>
</div>
<div class="r" style="top:89.6px;height:48.1px">
<div class="c num" style="left:0.0px;width:46.1px">3496</div>
<div class="c num" style="left:46.1px;width:80.8px">sp_954784</div>
<div class="c " style="left:126.9px;width:47.1px"><svg class="ic" width="30" height="30" viewBox="0 0 45 45" style="left:8.6px;top:8.3px"><rect x="0" y="0" width="45" height="45" rx="6" ry="6" fill="#050505"/><g stroke="#0f705b" stroke-width="0.7" fill="none"><path d="M15.2 13 L32 20.7 L22 33 Z"/></g><circle cx="15.2" cy="13" r="7.0" fill="url(#lg)"/><circle cx="32" cy="20.7" r="3.7" fill="url(#lg)" opacity="0.9"/><circle cx="22" cy="33" r="6.5" fill="url(#lg)"/></svg></div>
<div class="c num" style="left:174.0px;width:96.9px"></div>
<div class="c " style="left:270.9px;width:69.2px">普通会员</div>
<div class="c " style="left:340.1px;width:68.8px"><span class="st"><i></i>正常</span></div>
<div class="c " style="left:408.9px;width:95.1px">0</div>
<div class="c " style="left:504.0px;width:69.1px">0</div>
<div class="c num" style="left:573.1px;width:95.9px">18888888888</div>
<div class="c " style="left:669.0px;width:68.8px"></div>
<div class="c " style="left:737.8px;width:69.2px"></div>
<div class="c num" style="left:807.0px;width:147.0px"></div>
<div class="c" style="left:954.0px;width:330px;text-align:left;padding-left:15.2px">0x92f06ce7281268f07dd81c3b5a9e04f67d2a1b8c3e</div>
</div>
<div class="r o" style="top:137.7px;height:48.1px">
<div class="c num" style="left:0.0px;width:46.1px">3495</div>
<div class="c num" style="left:46.1px;width:80.8px">sp_884414</div>
<div class="c " style="left:126.9px;width:47.1px"><svg class="ic" width="30" height="30" viewBox="0 0 45 45" style="left:8.6px;top:8.3px"><rect x="0" y="0" width="45" height="45" rx="6" ry="6" fill="#050505"/><g stroke="#0f705b" stroke-width="0.7" fill="none"><path d="M15.2 13 L32 20.7 L22 33 Z"/></g><circle cx="15.2" cy="13" r="7.0" fill="url(#lg)"/><circle cx="32" cy="20.7" r="3.7" fill="url(#lg)" opacity="0.9"/><circle cx="22" cy="33" r="6.5" fill="url(#lg)"/></svg></div>
<div class="c num" style="left:174.0px;width:96.9px"></div>
<div class="c " style="left:270.9px;width:69.2px">普通会员</div>
<div class="c " style="left:340.1px;width:68.8px"><span class="st"><i></i>正常</span></div>
<div class="c " style="left:408.9px;width:95.1px">0</div>
<div class="c " style="left:504.0px;width:69.1px">0</div>
<div class="c num" style="left:573.1px;width:95.9px">18888888888</div>
<div class="c " style="left:669.0px;width:68.8px"></div>
<div class="c " style="left:737.8px;width:69.2px"></div>
<div class="c num" style="left:807.0px;width:147.0px"></div>
<div class="c" style="left:954.0px;width:330px;text-align:left;padding-left:13.2px">0x0cfc9c08d7fbaa1d0b4a09e3c5f7128b6d4a0e9c71</div>
</div>
<div class="r" style="top:185.8px;height:48.1px">
<div class="c num" style="left:0.0px;width:46.1px">3494</div>
<div class="c num" style="left:46.1px;width:80.8px">sp_526366</div>
<div class="c " style="left:126.9px;width:47.1px"><svg class="ic" width="30" height="30" viewBox="0 0 45 45" style="left:8.6px;top:8.3px"><rect x="0" y="0" width="45" height="45" rx="6" ry="6" fill="#050505"/><g stroke="#0f705b" stroke-width="0.7" fill="none"><path d="M15.2 13 L32 20.7 L22 33 Z"/></g><circle cx="15.2" cy="13" r="7.0" fill="url(#lg)"/><circle cx="32" cy="20.7" r="3.7" fill="url(#lg)" opacity="0.9"/><circle cx="22" cy="33" r="6.5" fill="url(#lg)"/></svg></div>
<div class="c num" style="left:174.0px;width:96.9px"></div>
<div class="c " style="left:270.9px;width:69.2px">普通会员</div>
<div class="c " style="left:340.1px;width:68.8px"><span class="st"><i></i>正常</span></div>
<div class="c " style="left:408.9px;width:95.1px">0</div>
<div class="c " style="left:504.0px;width:69.1px">0</div>
<div class="c num" style="left:573.1px;width:95.9px">18888888888</div>
<div class="c " style="left:669.0px;width:68.8px"></div>
<div class="c " style="left:737.8px;width:69.2px"></div>
<div class="c num" style="left:807.0px;width:147.0px"></div>
<div class="c" style="left:954.0px;width:330px;text-align:left;padding-left:15.2px">0x1612ea27c5eeb1351f3a8d40b97c6e25f1a3d8b047</div>
</div>
<div class="r o" style="top:233.9px;height:48.1px">
<div class="c num" style="left:0.0px;width:46.1px">3493</div>
<div class="c num" style="left:46.1px;width:80.8px">sp_626354</div>
<div class="c " style="left:126.9px;width:47.1px"><svg class="ic" width="30" height="30" viewBox="0 0 45 45" style="left:8.6px;top:8.3px"><rect x="0" y="0" width="45" height="45" rx="6" ry="6" fill="#050505"/><g stroke="#0f705b" stroke-width="0.7" fill="none"><path d="M15.2 13 L32 20.7 L22 33 Z"/></g><circle cx="15.2" cy="13" r="7.0" fill="url(#lg)"/><circle cx="32" cy="20.7" r="3.7" fill="url(#lg)" opacity="0.9"/><circle cx="22" cy="33" r="6.5" fill="url(#lg)"/></svg></div>
<div class="c num" style="left:174.0px;width:96.9px">15290407203</div>
<div class="c " style="left:270.9px;width:69.2px">普通会员</div>
<div class="c " style="left:340.1px;width:68.8px"><span class="st"><i></i>正常</span></div>
<div class="c " style="left:408.9px;width:95.1px">0</div>
<div class="c " style="left:504.0px;width:69.1px">0</div>
<div class="c num" style="left:573.1px;width:95.9px">18888888888</div>
<div class="c " style="left:669.0px;width:68.8px"></div>
<div class="c " style="left:737.8px;width:69.2px"></div>
<div class="c num" style="left:807.0px;width:147.0px"></div>
<div class="c" style="left:954.0px;width:330px;text-align:left;padding-left:13.2px">0xab48833a5f3a5c6ab4d94e07c1b82f6d3a59e0c714</div>
</div>
<div class="r" style="top:282.0px;height:48.1px">
<div class="c num" style="left:0.0px;width:46.1px">3491</div>
<div class="c num" style="left:46.1px;width:80.8px">sp_729128</div>
<div class="c " style="left:126.9px;width:47.1px"><svg class="ic" width="30" height="30" viewBox="0 0 45 45" style="left:8.6px;top:8.3px"><rect x="0" y="0" width="45" height="45" rx="6" ry="6" fill="#050505"/><g stroke="#0f705b" stroke-width="0.7" fill="none"><path d="M15.2 13 L32 20.7 L22 33 Z"/></g><circle cx="15.2" cy="13" r="7.0" fill="url(#lg)"/><circle cx="32" cy="20.7" r="3.7" fill="url(#lg)" opacity="0.9"/><circle cx="22" cy="33" r="6.5" fill="url(#lg)"/></svg></div>
<div class="c num" style="left:174.0px;width:96.9px">18305999953</div>
<div class="c " style="left:270.9px;width:69.2px">普通会员</div>
<div class="c " style="left:340.1px;width:68.8px"><span class="st"><i></i>正常</span></div>
<div class="c " style="left:408.9px;width:95.1px">0</div>
<div class="c " style="left:504.0px;width:69.1px">0</div>
<div class="c num" style="left:573.1px;width:95.9px">18888888888</div>
<div class="c " style="left:669.0px;width:68.8px"></div>
<div class="c " style="left:737.8px;width:69.2px">郑</div>
<div class="c num" style="left:807.0px;width:147.0px">350122199006074313</div>
<div class="c" style="left:954.0px;width:330px;text-align:left;padding-left:12.2px">0x46b5b1676940beb8bf97c2d1e4a03f58b6c7d9e012</div>
</div>
<div class="r o" style="top:330.1px;height:48.1px">
<div class="c num" style="left:0.0px;width:46.1px">3490</div>
<div class="c num" style="left:46.1px;width:80.8px">墨变6096</div>
<div class="c " style="left:126.9px;width:47.1px"><span class="brk" style="left:8.6px;top:8.3px"><svg class="ic" width="16" height="16" viewBox="0 0 16 16" style="left:1px;top:1px;overflow:visible"><path d="M0.5 0.5 H10.5 L15.5 5.5 V15.5 H0.5 Z" fill="url(#sky)" stroke="#8c8c8c" stroke-width="1"/><path d="M10.5 0.5 V5.5 H15.5 Z" fill="#f2f5fa" stroke="#8c8c8c" stroke-width="1" stroke-linejoin="round"/><ellipse cx="5" cy="4.9" rx="3.1" ry="1.2" fill="#fff"/><circle cx="5.6" cy="4" r="1.5" fill="#fff"/><path d="M1 15 L1 13.2 C3 10.6 6 9.4 9 10 C11.4 10.5 13.4 12.4 15 15 Z" fill="#3b9c2e"/><path d="M6.6 16.6 L9.9 16.6 L16.6 9.6 L16.6 7.2 Z" fill="#f9f9f9"/></svg></span></div>
<div class="c num" style="left:174.0px;width:96.9px">15205046096</div>
<div class="c " style="left:270.9px;width:69.2px">普通会员</div>
<div class="c " style="left:340.1px;width:68.8px"><span class="st"><i></i>正常</span></div>
<div class="c " style="left:408.9px;width:95.1px">0</div>
<div class="c " style="left:504.0px;width:69.1px">0</div>
<div class="c num" style="left:573.1px;width:95.9px">18888888888</div>
<div class="c " style="left:669.0px;width:68.8px"></div>
<div class="c " style="left:737.8px;width:69.2px">温斌</div>
<div class="c num" style="left:807.0px;width:147.0px">350702198711165811</div>
<div class="c" style="left:954.0px;width:330px;text-align:left;padding-left:9.2px">0x051a017b5413924a76454c8e2d9f3b60a17c5e8d24</div>
</div>
<div class="r" style="top:378.2px;height:48.1px">
<div class="c num" style="left:0.0px;width:46.1px">3489</div>
<div class="c num" style="left:46.1px;width:80.8px">墨变5869</div>
<div class="c " style="left:126.9px;width:47.1px"><span class="brk" style="left:8.6px;top:8.3px"><svg class="ic" width="16" height="16" viewBox="0 0 16 16" style="left:1px;top:1px;overflow:visible"><path d="M0.5 0.5 H10.5 L15.5 5.5 V15.5 H0.5 Z" fill="url(#sky)" stroke="#8c8c8c" stroke-width="1"/><path d="M10.5 0.5 V5.5 H15.5 Z" fill="#f2f5fa" stroke="#8c8c8c" stroke-width="1" stroke-linejoin="round"/><ellipse cx="5" cy="4.9" rx="3.1" ry="1.2" fill="#fff"/><circle cx="5.6" cy="4" r="1.5" fill="#fff"/><path d="M1 15 L1 13.2 C3 10.6 6 9.4 9 10 C11.4 10.5 13.4 12.4 15 15 Z" fill="#3b9c2e"/><path d="M6.6 16.6 L9.9 16.6 L16.6 9.6 L16.6 7.2 Z" fill="#fff"/></svg></span></div>
<div class="c num" style="left:174.0px;width:96.9px">18060865869</div>
<div class="c " style="left:270.9px;width:69.2px">普通会员</div>
<div class="c " style="left:340.1px;width:68.8px"><span class="st"><i></i>正常</span></div>
<div class="c " style="left:408.9px;width:95.1px">0</div>
<div class="c " style="left:504.0px;width:69.1px">0</div>
<div class="c num" style="left:573.1px;width:95.9px">18888888888</div>
<div class="c " style="left:669.0px;width:68.8px"></div>
<div class="c " style="left:737.8px;width:69.2px"></div>
<div class="c num" style="left:807.0px;width:147.0px"></div>
<div class="c" style="left:954.0px;width:330px;text-align:left;padding-left:14.2px">0x2558b8e1eb57423950bf7a3c1d6e9048b25f7c3a1e</div>
</div>
<div class="r o" style="top:426.3px;height:48.1px">
<div class="c num" style="left:0.0px;width:46.1px">3486</div>
<div class="c num" style="left:46.1px;width:80.8px">sp_435735</div>
<div class="c " style="left:126.9px;width:47.1px"><svg class="ic" width="30" height="30" viewBox="0 0 45 45" style="left:8.6px;top:8.3px"><rect x="0" y="0" width="45" height="45" rx="6" ry="6" fill="#050505"/><g stroke="#0f705b" stroke-width="0.7" fill="none"><path d="M15.2 13 L32 20.7 L22 33 Z"/></g><circle cx="15.2" cy="13" r="7.0" fill="url(#lg)"/><circle cx="32" cy="20.7" r="3.7" fill="url(#lg)" opacity="0.9"/><circle cx="22" cy="33" r="6.5" fill="url(#lg)"/></svg></div>
<div class="c num" style="left:174.0px;width:96.9px">13137678229</div>
<div class="c " style="left:270.9px;width:69.2px">普通会员</div>
<div class="c " style="left:340.1px;width:68.8px"><span class="st"><i></i>正常</span></div>
<div class="c " style="left:408.9px;width:95.1px">0</div>
<div class="c " style="left:504.0px;width:69.1px">0</div>
<div class="c num" style="left:573.1px;width:95.9px">18888888888</div>
<div class="c " style="left:669.0px;width:68.8px"></div>
<div class="c " style="left:737.8px;width:69.2px"></div>
<div class="c num" style="left:807.0px;width:147.0px"></div>
<div class="c" style="left:954.0px;width:330px;text-align:left;padding-left:10.2px">0x3479627f7b723e024123a5d8c9e1f40b67a2d3c8e5</div>
</div>
<div class="r" style="top:474.4px;height:48.1px">
<div class="c num" style="left:0.0px;width:46.1px">3477</div>
<div class="c num" style="left:46.1px;width:80.8px">zz_504039</div>
<div class="c " style="left:126.9px;width:47.1px"><svg class="ic" width="30" height="30" viewBox="0 0 45 45" style="left:8.6px;top:8.3px"><rect x="0" y="0" width="45" height="45" rx="6" ry="6" fill="#050505"/><g stroke="#0f705b" stroke-width="0.7" fill="none"><path d="M15.2 13 L32 20.7 L22 33 Z"/></g><circle cx="15.2" cy="13" r="7.0" fill="url(#lg)"/><circle cx="32" cy="20.7" r="3.7" fill="url(#lg)" opacity="0.9"/><circle cx="22" cy="33" r="6.5" fill="url(#lg)"/></svg></div>
<div class="c num" style="left:174.0px;width:96.9px">13584455665</div>
<div class="c " style="left:270.9px;width:69.2px">商家</div>
<div class="c " style="left:340.1px;width:68.8px"><span class="st"><i></i>正常</span></div>
<div class="c " style="left:408.9px;width:95.1px">0</div>
<div class="c " style="left:504.0px;width:69.1px">0</div>
<div class="c num" style="left:573.1px;width:95.9px">17727407936</div>
<div class="c " style="left:669.0px;width:68.8px"></div>
<div class="c " style="left:737.8px;width:69.2px"></div>
<div class="c num" style="left:807.0px;width:147.0px"></div>
<div class="c" style="left:954.0px;width:330px;text-align:left;padding-left:13.2px">0xe102ae6aa28ef67bc680c4d1a93b5e7f20c8d6a41b</div>
</div>
<i class="vb" style="left:0.0px"></i>
<i class="vb" style="left:46.1px"></i>
<i class="vb" style="left:126.9px"></i>
<i class="vb" style="left:174.0px"></i>
<i class="vb" style="left:270.9px"></i>
<i class="vb" style="left:340.1px"></i>
<i class="vb" style="left:408.9px"></i>
<i class="vb" style="left:504.0px"></i>
<i class="vb" style="left:573.1px"></i>
<i class="vb" style="left:669.0px"></i>
<i class="vb" style="left:737.8px"></i>
<i class="vb" style="left:807.0px"></i>
<i class="vb" style="left:954.0px"></i>
<i class="vb" style="left:1271.6px"></i>
</div>
<div id="fix" style="left:1138.8px;top:214.4px;width:220.4px;height:523.9px">
<div class="r h" style="top:0;height:41.5px"><div class="c" style="left:0;width:220.4px">操作</div></div>
<div class="r o" style="top:41.5px;height:48.1px"><div class="btn b-green ob" style="left:8px;width:77px">充值/扣费</div><div class="btn b-green ob" style="left:89px;width:74px">赠送藏品</div><div class="btn b-green ob s" style="left:166px"><svg class="ic" width="10" height="10" viewBox="0 0 12 12" style="left:5.5px;top:4px"><g fill="#fff"><path d="M8.1 0.6 C8.5 0.2 9.2 0.2 9.6 0.6 L11.4 2.4 C11.8 2.8 11.8 3.5 11.4 3.9 L10.5 4.8 L7.2 1.5 Z"/><path d="M6.5 2.2 L9.8 5.5 L3.9 11.4 L0.3 11.7 L0.6 8.1 Z"/></g></svg></div><div class="btn b-red ob s" style="left:191px;width:21px"><svg class="ic" width="9.4" height="11.280000000000001" viewBox="0 0 10 12" style="left:4.8px;top:3.1px"><g fill="#fff"><path d="M3.6 0.2 L6.4 0.2 L7 1.4 L9.6 1.4 L9.6 2.8 L0.4 2.8 L0.4 1.4 L3 1.4 Z"/><path d="M1.2 3.4 L8.8 3.4 L8.4 11 C8.35 11.6 8 12 7.4 12 L2.6 12 C2 12 1.65 11.6 1.6 11 Z"/></g><g fill="#e74c3c"><rect x="3" y="4.8" width="0.9" height="5.6"/><rect x="4.55" y="4.8" width="0.9" height="5.6"/><rect x="6.1" y="4.8" width="0.9" height="5.6"/></g></svg></div></div>
<div class="r" style="top:89.6px;height:48.1px"><div class="btn b-green ob" style="left:8px;width:77px">充值/扣费</div><div class="btn b-green ob" style="left:89px;width:74px">赠送藏品</div><div class="btn b-green ob s" style="left:166px"><svg class="ic" width="10" height="10" viewBox="0 0 12 12" style="left:5.5px;top:4px"><g fill="#fff"><path d="M8.1 0.6 C8.5 0.2 9.2 0.2 9.6 0.6 L11.4 2.4 C11.8 2.8 11.8 3.5 11.4 3.9 L10.5 4.8 L7.2 1.5 Z"/><path d="M6.5 2.2 L9.8 5.5 L3.9 11.4 L0.3 11.7 L0.6 8.1 Z"/></g></svg></div><div class="btn b-red ob s" style="left:191px;width:21px"><svg class="ic" width="9.4" height="11.280000000000001" viewBox="0 0 10 12" style="left:4.8px;top:3.1px"><g fill="#fff"><path d="M3.6 0.2 L6.4 0.2 L7 1.4 L9.6 1.4 L9.6 2.8 L0.4 2.8 L0.4 1.4 L3 1.4 Z"/><path d="M1.2 3.4 L8.8 3.4 L8.4 11 C8.35 11.6 8 12 7.4 12 L2.6 12 C2 12 1.65 11.6 1.6 11 Z"/></g><g fill="#e74c3c"><rect x="3" y="4.8" width="0.9" height="5.6"/><rect x="4.55" y="4.8" width="0.9" height="5.6"/><rect x="6.1" y="4.8" width="0.9" height="5.6"/></g></svg></div></div>
<div class="r o" style="top:137.7px;height:48.1px"><div class="btn b-green ob" style="left:8px;width:77px">充值/扣费</div><div class="btn b-green ob" style="left:89px;width:74px">赠送藏品</div><div class="btn b-green ob s" style="left:166px"><svg class="ic" width="10" height="10" viewBox="0 0 12 12" style="left:5.5px;top:4px"><g fill="#fff"><path d="M8.1 0.6 C8.5 0.2 9.2 0.2 9.6 0.6 L11.4 2.4 C11.8 2.8 11.8 3.5 11.4 3.9 L10.5 4.8 L7.2 1.5 Z"/><path d="M6.5 2.2 L9.8 5.5 L3.9 11.4 L0.3 11.7 L0.6 8.1 Z"/></g></svg></div><div class="btn b-red ob s" style="left:191px;width:21px"><svg class="ic" width="9.4" height="11.280000000000001" viewBox="0 0 10 12" style="left:4.8px;top:3.1px"><g fill="#fff"><path d="M3.6 0.2 L6.4 0.2 L7 1.4 L9.6 1.4 L9.6 2.8 L0.4 2.8 L0.4 1.4 L3 1.4 Z"/><path d="M1.2 3.4 L8.8 3.4 L8.4 11 C8.35 11.6 8 12 7.4 12 L2.6 12 C2 12 1.65 11.6 1.6 11 Z"/></g><g fill="#e74c3c"><rect x="3" y="4.8" width="0.9" height="5.6"/><rect x="4.55" y="4.8" width="0.9" height="5.6"/><rect x="6.1" y="4.8" width="0.9" height="5.6"/></g></svg></div></div>
<div class="r" style="top:185.8px;height:48.1px"><div class="btn b-green ob" style="left:8px;width:77px">充值/扣费</div><div class="btn b-green ob" style="left:89px;width:74px">赠送藏品</div><div class="btn b-green ob s" style="left:166px"><svg class="ic" width="10" height="10" viewBox="0 0 12 12" style="left:5.5px;top:4px"><g fill="#fff"><path d="M8.1 0.6 C8.5 0.2 9.2 0.2 9.6 0.6 L11.4 2.4 C11.8 2.8 11.8 3.5 11.4 3.9 L10.5 4.8 L7.2 1.5 Z"/><path d="M6.5 2.2 L9.8 5.5 L3.9 11.4 L0.3 11.7 L0.6 8.1 Z"/></g></svg></div><div class="btn b-red ob s" style="left:191px;width:21px"><svg class="ic" width="9.4" height="11.280000000000001" viewBox="0 0 10 12" style="left:4.8px;top:3.1px"><g fill="#fff"><path d="M3.6 0.2 L6.4 0.2 L7 1.4 L9.6 1.4 L9.6 2.8 L0.4 2.8 L0.4 1.4 L3 1.4 Z"/><path d="M1.2 3.4 L8.8 3.4 L8.4 11 C8.35 11.6 8 12 7.4 12 L2.6 12 C2 12 1.65 11.6 1.6 11 Z"/></g><g fill="#e74c3c"><rect x="3" y="4.8" width="0.9" height="5.6"/><rect x="4.55" y="4.8" width="0.9" height="5.6"/><rect x="6.1" y="4.8" width="0.9" height="5.6"/></g></svg></div></div>
<div class="r o" style="top:233.9px;height:48.1px"><div class="btn b-green ob" style="left:8px;width:77px">充值/扣费</div><div class="btn b-green ob" style="left:89px;width:74px">赠送藏品</div><div class="btn b-green ob s" style="left:166px"><svg class="ic" width="10" height="10" viewBox="0 0 12 12" style="left:5.5px;top:4px"><g fill="#fff"><path d="M8.1 0.6 C8.5 0.2 9.2 0.2 9.6 0.6 L11.4 2.4 C11.8 2.8 11.8 3.5 11.4 3.9 L10.5 4.8 L7.2 1.5 Z"/><path d="M6.5 2.2 L9.8 5.5 L3.9 11.4 L0.3 11.7 L0.6 8.1 Z"/></g></svg></div><div class="btn b-red ob s" style="left:191px;width:21px"><svg class="ic" width="9.4" height="11.280000000000001" viewBox="0 0 10 12" style="left:4.8px;top:3.1px"><g fill="#fff"><path d="M3.6 0.2 L6.4 0.2 L7 1.4 L9.6 1.4 L9.6 2.8 L0.4 2.8 L0.4 1.4 L3 1.4 Z"/><path d="M1.2 3.4 L8.8 3.4 L8.4 11 C8.35 11.6 8 12 7.4 12 L2.6 12 C2 12 1.65 11.6 1.6 11 Z"/></g><g fill="#e74c3c"><rect x="3" y="4.8" width="0.9" height="5.6"/><rect x="4.55" y="4.8" width="0.9" height="5.6"/><rect x="6.1" y="4.8" width="0.9" height="5.6"/></g></svg></div></div>
<div class="r" style="top:282.0px;height:48.1px"><div class="btn b-green ob" style="left:8px;width:77px">充值/扣费</div><div class="btn b-green ob" style="left:89px;width:74px">赠送藏品</div><div class="btn b-green ob s" style="left:166px"><svg class="ic" width="10" height="10" viewBox="0 0 12 12" style="left:5.5px;top:4px"><g fill="#fff"><path d="M8.1 0.6 C8.5 0.2 9.2 0.2 9.6 0.6 L11.4 2.4 C11.8 2.8 11.8 3.5 11.4 3.9 L10.5 4.8 L7.2 1.5 Z"/><path d="M6.5 2.2 L9.8 5.5 L3.9 11.4 L0.3 11.7 L0.6 8.1 Z"/></g></svg></div><div class="btn b-red ob s" style="left:191px;width:21px"><svg class="ic" width="9.4" height="11.280000000000001" viewBox="0 0 10 12" style="left:4.8px;top:3.1px"><g fill="#fff"><path d="M3.6 0.2 L6.4 0.2 L7 1.4 L9.6 1.4 L9.6 2.8 L0.4 2.8 L0.4 1.4 L3 1.4 Z"/><path d="M1.2 3.4 L8.8 3.4 L8.4 11 C8.35 11.6 8 12 7.4 12 L2.6 12 C2 12 1.65 11.6 1.6 11 Z"/></g><g fill="#e74c3c"><rect x="3" y="4.8" width="0.9" height="5.6"/><rect x="4.55" y="4.8" width="0.9" height="5.6"/><rect x="6.1" y="4.8" width="0.9" height="5.6"/></g></svg></div></div>
<div class="r o" style="top:330.1px;height:48.1px"><div class="btn b-green ob" style="left:8px;width:77px">充值/扣费</div><div class="btn b-green ob" style="left:89px;width:74px">赠送藏品</div><div class="btn b-green ob s" style="left:166px"><svg class="ic" width="10" height="10" viewBox="0 0 12 12" style="left:5.5px;top:4px"><g fill="#fff"><path d="M8.1 0.6 C8.5 0.2 9.2 0.2 9.6 0.6 L11.4 2.4 C11.8 2.8 11.8 3.5 11.4 3.9 L10.5 4.8 L7.2 1.5 Z"/><path d="M6.5 2.2 L9.8 5.5 L3.9 11.4 L0.3 11.7 L0.6 8.1 Z"/></g></svg></div><div class="btn b-red ob s" style="left:191px;width:21px"><svg class="ic" width="9.4" height="11.280000000000001" viewBox="0 0 10 12" style="left:4.8px;top:3.1px"><g fill="#fff"><path d="M3.6 0.2 L6.4 0.2 L7 1.4 L9.6 1.4 L9.6 2.8 L0.4 2.8 L0.4 1.4 L3 1.4 Z"/><path d="M1.2 3.4 L8.8 3.4 L8.4 11 C8.35 11.6 8 12 7.4 12 L2.6 12 C2 12 1.65 11.6 1.6 11 Z"/></g><g fill="#e74c3c"><rect x="3" y="4.8" width="0.9" height="5.6"/><rect x="4.55" y="4.8" width="0.9" height="5.6"/><rect x="6.1" y="4.8" width="0.9" height="5.6"/></g></svg></div></div>
<div class="r" style="top:378.2px;height:48.1px"><div class="btn b-green ob" style="left:8px;width:77px">充值/扣费</div><div class="btn b-green ob" style="left:89px;width:74px">赠送藏品</div><div class="btn b-green ob s" style="left:166px"><svg class="ic" width="10" height="10" viewBox="0 0 12 12" style="left:5.5px;top:4px"><g fill="#fff"><path d="M8.1 0.6 C8.5 0.2 9.2 0.2 9.6 0.6 L11.4 2.4 C11.8 2.8 11.8 3.5 11.4 3.9 L10.5 4.8 L7.2 1.5 Z"/><path d="M6.5 2.2 L9.8 5.5 L3.9 11.4 L0.3 11.7 L0.6 8.1 Z"/></g></svg></div><div class="btn b-red ob s" style="left:191px;width:21px"><svg class="ic" width="9.4" height="11.280000000000001" viewBox="0 0 10 12" style="left:4.8px;top:3.1px"><g fill="#fff"><path d="M3.6 0.2 L6.4 0.2 L7 1.4 L9.6 1.4 L9.6 2.8 L0.4 2.8 L0.4 1.4 L3 1.4 Z"/><path d="M1.2 3.4 L8.8 3.4 L8.4 11 C8.35 11.6 8 12 7.4 12 L2.6 12 C2 12 1.65 11.6 1.6 11 Z"/></g><g fill="#e74c3c"><rect x="3" y="4.8" width="0.9" height="5.6"/><rect x="4.55" y="4.8" width="0.9" height="5.6"/><rect x="6.1" y="4.8" width="0.9" height="5.6"/></g></svg></div></div>
<div class="r o" style="top:426.3px;height:48.1px"><div class="btn b-green ob" style="left:8px;width:77px">充值/扣费</div><div class="btn b-green ob" style="left:89px;width:74px">赠送藏品</div><div class="btn b-green ob s" style="left:166px"><svg class="ic" width="10" height="10" viewBox="0 0 12 12" style="left:5.5px;top:4px"><g fill="#fff"><path d="M8.1 0.6 C8.5 0.2 9.2 0.2 9.6 0.6 L11.4 2.4 C11.8 2.8 11.8 3.5 11.4 3.9 L10.5 4.8 L7.2 1.5 Z"/><path d="M6.5 2.2 L9.8 5.5 L3.9 11.4 L0.3 11.7 L0.6 8.1 Z"/></g></svg></div><div class="btn b-red ob s" style="left:191px;width:21px"><svg class="ic" width="9.4" height="11.280000000000001" viewBox="0 0 10 12" style="left:4.8px;top:3.1px"><g fill="#fff"><path d="M3.6 0.2 L6.4 0.2 L7 1.4 L9.6 1.4 L9.6 2.8 L0.4 2.8 L0.4 1.4 L3 1.4 Z"/><path d="M1.2 3.4 L8.8 3.4 L8.4 11 C8.35 11.6 8 12 7.4 12 L2.6 12 C2 12 1.65 11.6 1.6 11 Z"/></g><g fill="#e74c3c"><rect x="3" y="4.8" width="0.9" height="5.6"/><rect x="4.55" y="4.8" width="0.9" height="5.6"/><rect x="6.1" y="4.8" width="0.9" height="5.6"/></g></svg></div></div>
<div class="r" style="top:474.4px;height:48.1px"><div class="btn b-green ob" style="left:8px;width:77px">充值/扣费</div><div class="btn b-green ob" style="left:89px;width:74px">赠送藏品</div><div class="btn b-green ob s" style="left:166px"><svg class="ic" width="10" height="10" viewBox="0 0 12 12" style="left:5.5px;top:4px"><g fill="#fff"><path d="M8.1 0.6 C8.5 0.2 9.2 0.2 9.6 0.6 L11.4 2.4 C11.8 2.8 11.8 3.5 11.4 3.9 L10.5 4.8 L7.2 1.5 Z"/><path d="M6.5 2.2 L9.8 5.5 L3.9 11.4 L0.3 11.7 L0.6 8.1 Z"/></g></svg></div><div class="btn b-red ob s" style="left:191px;width:21px"><svg class="ic" width="9.4" height="11.280000000000001" viewBox="0 0 10 12" style="left:4.8px;top:3.1px"><g fill="#fff"><path d="M3.6 0.2 L6.4 0.2 L7 1.4 L9.6 1.4 L9.6 2.8 L0.4 2.8 L0.4 1.4 L3 1.4 Z"/><path d="M1.2 3.4 L8.8 3.4 L8.4 11 C8.35 11.6 8 12 7.4 12 L2.6 12 C2 12 1.65 11.6 1.6 11 Z"/></g><g fill="#e74c3c"><rect x="3" y="4.8" width="0.9" height="5.6"/><rect x="4.55" y="4.8" width="0.9" height="5.6"/><rect x="6.1" y="4.8" width="0.9" height="5.6"/></g></svg></div></div>
<i class="vb" style="left:0"></i>
</div>
<div id="sb" style="left:15.4px;top:736.3px;width:1343.9px"><i class="th"></i><svg class="ic" width="6" height="8" viewBox="0 0 6 8" style="left:5.5px;top:5.5px"><path d="M5 0 L5 8 L0.5 4 Z" fill="#a3a3a3"/></svg><svg class="ic" width="6" height="8" viewBox="0 0 6 8" style="left:1333.5px;top:5px"><path d="M1 0 L1 8 L5.5 4 Z" fill="#505050"/></svg></div>
<span class="abs pinfo" style="left:15px;top:772.6px">显示第 1 到第 10 条记录，总共 18 条记录 每页显示</span>
<div class="btn b-def" style="left:315px;top:765.8px;width:51px;height:31px;line-height:29px;text-align:left;padding-left:13px;color:#444">10<svg class="ic" width="7" height="3.8500000000000005" viewBox="0 0 10 5.5" style="left:29px;top:13px"><path d="M0 5.5 L10 5.5 L5 0 Z" fill="#333"/></svg></div>
<span class="abs pinfo" style="left:370px;top:772.6px">条记录</span>
<div class="pg" style="left:1057.3px;top:764.2px;width:64.3px;height:33px;line-height:29.4px;border-radius:3px 0 0 3px;">上一页</div>
<div class="pg on" style="left:1120.6px;top:764.2px;width:34.4px;height:33px;line-height:29.4px;">1</div>
<div class="pg" style="left:1154.0px;top:764.2px;width:31.9px;height:33px;line-height:29.4px;">2</div>
<div class="pg" style="left:1184.9px;top:764.2px;width:64.7px;height:33px;line-height:29.4px;border-radius:0 3px 3px 0;">下一页</div>
<div class="pg" style="left:1255.3px;top:764.2px;width:49.4px;height:31px;background:#fff;border-color:#ccc"></div>
<div class="btn b-def" style="left:1310.3px;top:765px;width:49.5px;height:30.6px;line-height:28px">跳转</div>
</div>
<div id="status">0.myhxzy.com/admin888.php/users?ref=addtabs</div>
<div id="trace1"><svg class="ic" width="30" height="22" viewBox="0 0 30 22" style="left:0;top:0"><path d="M17.2 4.7 C19.6 9.6 17.6 12.6 22.6 10.6 C24 15 23.2 18 24.8 22 L2 22 C3 16.4 8 13.6 12 11 C15 9 16.8 7.5 17.2 4.7 Z" fill="#fff"/><path d="M6 22 C9 17.8 16 16.6 21.6 13.4 L22.2 15.4 C17.4 18 12.4 19.2 9.8 22 Z" fill="#62a63d"/></svg></div>
<div id="trace2">0.030897s</div>
</body>
</html>
